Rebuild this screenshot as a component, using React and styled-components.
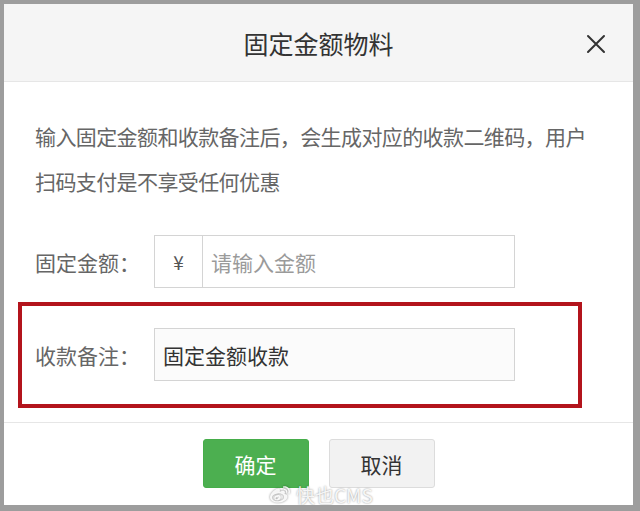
import React from 'react';
import styled, { createGlobalStyle } from 'styled-components';
import { FaWeibo } from 'react-icons/fa';

const GlobalStyle = createGlobalStyle`
  html, body {
    margin: 0;
    padding: 0;
    background: #9d9d9d;
  }
  body {
    font-family: "Noto Sans CJK SC", "Noto Sans", sans-serif;
  }
`;

export default function App() {
  return (
    <>
      <GlobalStyle />
      <Modal>
        <Header>
          <Title>固定金额物料</Title>
          <CloseButton aria-label="关闭">
            <svg width="20" height="20" viewBox="0 0 20 20">
              <path d="M2 2 L18 18 M18 2 L2 18" stroke="#333" strokeWidth="2" strokeLinecap="round" />
            </svg>
          </CloseButton>
        </Header>
        <Body>
          <Intro>
            输入固定金额和收款备注后，会生成对应的收款二维码，用户
            <br />
            扫码支付是不享受任何优惠
          </Intro>
          <FormRow>
            <Label>固定金额：</Label>
            <InputGroup>
              <Addon>¥</Addon>
              <Field placeholder="请输入金额" />
            </InputGroup>
          </FormRow>
          <Highlight>
            <FormRow>
              <Label>收款备注：</Label>
              <InputGroup $filled>
                <Field defaultValue="固定金额收款" />
              </InputGroup>
            </FormRow>
          </Highlight>
        </Body>
        <Footer>
          <Button $primary>确定</Button>
          <Button>取消</Button>
          <Watermark>
            <FaWeibo size={20} />
            <span>快也CMS</span>
          </Watermark>
        </Footer>
      </Modal>
    </>
  );
}

const Modal = styled.div`
  margin: 4px 7px 0 4px;
  height: 501px;
  background: #fff;
  display: flex;
  flex-direction: column;
  position: relative;
`;

const Header = styled.div`
  height: 77px;
  border-bottom: 1px solid #e6e6e6;
  background: #f5f5f5;
  display: flex;
  align-items: center;
  justify-content: center;
  position: relative;
`;

const Title = styled.h3`
  margin: 0;
  font-size: 25px;
  font-weight: 400;
  color: #333;
`;

const CloseButton = styled.button`
  position: absolute;
  right: 27px;
  top: 30px;
  width: 20px;
  height: 20px;
  padding: 0;
  border: none;
  background: none;
  display: flex;
`;

const Body = styled.div`
  height: 340px;
  box-sizing: border-box;
  padding: 32px 20px 14px 31px;
  display: flex;
  flex-direction: column;
`;

const Intro = styled.p`
  margin: 0 0 31px;
  font-size: 21px;
  letter-spacing: -0.6px;
  line-height: 45px;
  color: #666;
  white-space: nowrap;
`;

const FormRow = styled.div`
  display: flex;
  align-items: center;
`;

const Label = styled.span`
  width: 119px;
  font-size: 21px;
  color: #666;
`;

const InputGroup = styled.div`
  width: 361px;
  height: 53px;
  box-sizing: border-box;
  border: 1px solid #d4d4d4;
  display: flex;
  background: ${p => (p.$filled ? '#fbfbfb' : '#fff')};
`;

const Addon = styled.span`
  width: 47px;
  border-right: 1px solid #d4d4d4;
  display: flex;
  align-items: center;
  justify-content: center;
  font-size: 19px;
  color: #555;
`;

const Field = styled.input`
  flex: 1;
  min-width: 0;
  border: none;
  outline: none;
  background: transparent;
  padding: 0 8px;
  font-family: inherit;
  font-size: 21px;
  color: #333;

  &::placeholder {
    color: #9a9a9a;
  }
`;

const Highlight = styled.div`
  margin: 14px 0 0 -17px;
  width: 564px;
  height: 106px;
  box-sizing: border-box;
  border: 4px solid #b3141c;
  padding: 22px 0 0 13px;
`;

const Footer = styled.div`
  border-top: 1px solid #e6e6e6;
  padding: 16px 0 17px;
  display: flex;
  justify-content: center;
  gap: 20px;
  position: relative;
`;

const Button = styled.button`
  width: 106px;
  height: 49px;
  border-radius: 3px;
  font-family: inherit;
  font-size: 21px;
  border: 1px solid ${p => (p.$primary ? '#46ad4a' : '#dcdcdc')};
  background: ${p => (p.$primary ? '#4caf50' : '#f2f2f2')};
  color: ${p => (p.$primary ? '#fff' : '#333')};
`;

const Watermark = styled.div`
  position: absolute;
  left: 266px;
  top: 58px;
  display: flex;
  align-items: center;
  gap: 6px;
  color: rgba(255, 255, 255, 0.9);
  font-size: 19px;
  text-shadow: 0 0 2px rgba(0, 0, 0, 0.45);

  svg {
    filter: drop-shadow(0 0 1px rgba(0, 0, 0, 0.5));
  }
`;
